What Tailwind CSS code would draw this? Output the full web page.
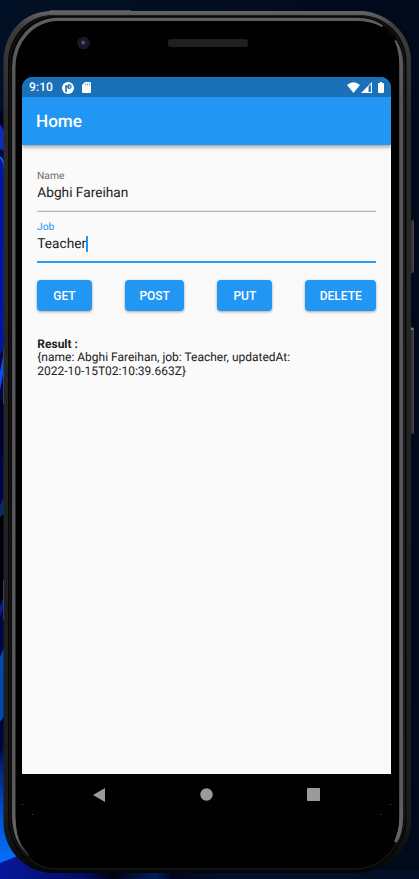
<!DOCTYPE html>
<html lang="en">
<head>
<meta charset="utf-8">
<title>Home</title>
<script src="https://cdn.jsdelivr.net/npm/@tailwindcss/browser@4"></script>
</head>
<body class="relative h-[879px] w-[419px] overflow-hidden bg-[#020d21] font-['Roboto',sans-serif] text-[#212121] [text-rendering:geometricPrecision]">
<!-- Wallpaper and handset -->
<svg class="absolute inset-0" width="419" height="879" viewBox="0 0 419 879" aria-hidden="true">
  <defs>
    <linearGradient id="sky" x1="0" x2="1"><stop offset="0" stop-color="#021026"/><stop offset="1" stop-color="#010a1b"/></linearGradient>
    <linearGradient id="low" x1="0" y1="0" x2="0" y2="1"><stop offset="0" stop-color="#000a48"/><stop offset=".55" stop-color="#0052d8"/><stop offset="1" stop-color="#0878ff"/></linearGradient>
    <linearGradient id="floor" x1="0" x2="1"><stop offset="0" stop-color="#061899"/><stop offset=".2" stop-color="#000d62"/><stop offset=".27" stop-color="#000211"/><stop offset=".37" stop-color="#001e60"/><stop offset=".41" stop-color="#000622"/><stop offset=".55" stop-color="#03102d"/><stop offset="1" stop-color="#020f24"/></linearGradient>
    <linearGradient id="rim" gradientUnits="userSpaceOnUse" x1="0" y1="10" x2="0" y2="874"><stop offset="0" stop-color="#68686c"/><stop offset=".02" stop-color="#3c3c3d"/><stop offset=".12" stop-color="#2b2b2b"/><stop offset=".93" stop-color="#1c1c1c"/><stop offset="1" stop-color="#050505"/></linearGradient>
    <linearGradient id="shine" gradientUnits="userSpaceOnUse" x1="0" y1="18" x2="0" y2="855"><stop offset="0" stop-color="#5f5f60"/><stop offset=".1" stop-color="#545456"/><stop offset=".93" stop-color="#5a5a5c"/><stop offset=".98" stop-color="#666"/><stop offset="1" stop-color="#222"/></linearGradient>
    <pattern id="mesh" width="2" height="2" patternUnits="userSpaceOnUse"><rect width="2" height="2" fill="#1d1d1d"/><rect width="1" height="1" fill="#292929"/></pattern>
  </defs>
  <rect width="419" height="879" fill="url(#sky)"/>
  <path d="M0 108Q8 116 10 130V879H0Z" fill="#000545"/>
  <path d="M0 110L7 121V133L0 124Z" fill="#00001d"/>
  <path d="M0 124L7 136V152L0 149Z" fill="#102bb5"/>
  <path d="M0 158Q5 163 5 185V345L0 355Z" fill="#0016a0"/>
  <path d="M0 157Q5 161 5 174" fill="none" stroke="#076af4" stroke-width="2"/>
  <path d="M0 372L5 345V365L0 390Z" fill="#064bff"/>
  <path d="M0 399H5V445L0 462Z" fill="#00002c"/>
  <path d="M0 506L5 494V513L0 517Z" fill="#082c60"/>
  <path d="M0 517L5 513V590L0 608Z" fill="#00000b"/>
  <path d="M0 606L5 594V603L0 617Z" fill="#061a96"/>
  <path d="M0 657L5 645V718L0 722Z" fill="#0048ad"/>
  <path d="M0 722L5 715V740L0 779Z" fill="#00043c"/>
  <path d="M0 760L3 742L6 820L26 866L0 875Z" fill="url(#low)"/>
  <path d="M0 863L20 855L38 870H419V879H0Z" fill="url(#floor)"/>
  <path d="M3.5 349V404M3.5 580V620" stroke="#555b66"/>
  <rect x="410" y="220" width="4" height="53" rx="1" fill="#303030"/>
  <path d="M413.2 221V272" stroke="#484848" stroke-width="1.3"/>
  <rect x="410" y="327" width="4" height="107" rx="1" fill="#303030"/>
  <path d="M413.2 329V433" stroke="#484848" stroke-width="1.3"/>
  <rect x="410.5" y="328" width="3" height="2" fill="#777"/>
  <path d="M50 10.5H131" stroke="#4b4b4b"/>
  <path d="M50 11H362C388 13 410 33 411 60V823C410 852 385 873 357 873H53C26 873 4 851 3.5 823V60C5 31 24 12 50 11Z" fill="url(#rim)"/>
  <path d="M51 15H361C386 16 406 36 406.5 61V822C405 848 382 871 356 871H54C29 871 9 848 8 821V61C9 36 28 16 51 15Z" fill="#070707"/>
  <path d="M52 15.5H360C385 18 404 37 404.5 62V820C403 846 380 869 355 869H56C31 869 11 846 10 820V62C11 37 29 18 52 15.5Z" fill="#080808" stroke="#1c1c1c"/>
  <path d="M56 18H359C382 19 403 38 403.5 64V822C402 846 378 867 354 867H57C33 867 12 846 11.5 820V64C12 39 31 19 56 18Z" fill="#050505"/>
  <path d="M382 27C374 21 365 19.5 357 19.5H58C32 20 14 41 13.7 67V816C14 833 19 845 29 855" fill="none" stroke="url(#shine)" stroke-width="3.5"/>
  <path d="M394.5 41C399 48 401.2 56 401.2 65V817C401 829 399 836 395 842" fill="none" stroke="url(#shine)" stroke-width="4"/>
  <path d="M16 70C17 39 35 22 58 21H357C368 21 378 24 383 28L395 42C398 49 399 56 399 65V817C399 827 397 835 394 842C386 860 373 868 354 868H57C40 868 34 861 28 853C19 844 16 834 16 820Z" fill="#010101"/>
  <circle cx="83.5" cy="43" r="6.3" fill="#1b1b1d"/><circle cx="83.5" cy="43" r="4.3" fill="#171925"/><circle cx="83.5" cy="42.7" r="2.7" fill="#242b58"/><circle cx="83" cy="42.5" r="1" fill="#7182ad"/>
  <rect x="168" y="39" width="80" height="8" rx="3" fill="url(#mesh)"/>
  <path d="M22 804h1v1h-1zM32 814h1v1h-1zM390 804h1v1h-1zM380 814h1v1h-1z" fill="#555"/>
</svg>

<main class="relative ml-[22px] mt-[77px] flex h-[738px] w-[369px] flex-col overflow-hidden rounded-t-[11px]">
  <header class="z-10 shrink-0 bg-[#2196f3] text-white shadow-[0_2px_4px_rgba(0,0,0,0.38)]">
    <div class="flex h-5 items-center bg-[#1a71b7] pl-[7px] pr-[7px]">
      <span class="w-[33px] text-[12px] font-medium leading-5 tracking-[0.1px]">9:10</span>
      <svg class="mt-px" width="12" height="12" viewBox="0 0 12 12"><circle cx="6" cy="6" r="6" fill="white"/><path d="M3.2 9.7V3.2H5.8V5.7H4.8V10.5" fill="#1a71b7"/><path d="M6.6 2.9H7.3A1.75 1.75 0 0 1 7.3 6.4H6.6Z" fill="none" stroke="#1a71b7" stroke-width="1.2"/></svg>
      <svg class="ml-2 mt-px" width="9" height="11" viewBox="0 0 9 11"><path d="M3 0H8Q9 0 9 1V10Q9 11 8 11H1Q0 11 0 10V3Z" fill="white"/><path d="M3.5 1.5V3.5M5.5 1.5V3.5M7.5 1.5V3.5" stroke="#1a71b7" stroke-width=".6"/></svg>
      <svg class="ml-auto" width="13" height="11" viewBox="0 0 13 11"><path d="M0 2.9Q6.5-2.4 13 2.9L6.5 11Z" fill="white"/></svg>
      <svg class="ml-[1px]" width="11" height="11" viewBox="0 0 11 11"><path d="M0 11L11 0V11Z" fill="white"/><path d="M7.6 4.5L9.9 2.2V9.9H7.6Z" fill="#1a71b7"/></svg>
      <svg class="ml-[6px]" width="6" height="11" viewBox="0 0 6 11"><path d="M2 0H4V1H5.2Q6 1 6 2V10Q6 11 5 11H1Q0 11 0 10V2Q0 1 .8 1H2Z" fill="white"/></svg>
    </div>
    <h1 class="flex h-12 items-center pl-[14px] pt-px text-[17.14px] font-medium leading-5">Home</h1>
  </header>

  <section class="flex grow flex-col bg-[#fafafa] px-[15px] pt-[25px]">
    <div class="h-[42px] border-b border-[#b5b5b5] text-[13.7px] shadow-[inset_0_-1px_0_#ebebeb]">
      <div class="text-[10.3px] leading-3 text-[#6b6b6b]">Name</div>
      <div class="mt-[2px] pl-[0.3px] leading-[18px]">Abghi Fareihan</div>
    </div>
    <div class="mt-[9px] h-[42px] border-b-2 border-[#2b9af3] text-[13.7px]">
      <div class="text-[10.3px] leading-3 text-[#2196f3]">Job</div>
      <div class="mt-[2px] flex items-center pl-[0.3px] leading-[18px]">Teacher<span class="-ml-[0.4px] mb-px h-4 w-[2px] bg-[#2196f3]"></span></div>
    </div>
    <div class="mt-[17px] flex justify-between text-[12px] font-medium text-white">
      <button class="h-[31px] w-[55px] rounded-[4px] bg-[#2196f3] pt-px shadow-[0_1px_3px_rgba(0,0,0,0.35)]">GET</button>
      <button class="h-[31px] w-[59px] rounded-[4px] bg-[#2196f3] pt-px shadow-[0_1px_3px_rgba(0,0,0,0.35)]">POST</button>
      <button class="h-[31px] w-[55px] rounded-[4px] bg-[#2196f3] pt-px shadow-[0_1px_3px_rgba(0,0,0,0.35)]">PUT</button>
      <button class="h-[31px] w-[70.5px] rounded-[4px] bg-[#2196f3] pt-px shadow-[0_1px_3px_rgba(0,0,0,0.35)]">DELETE</button>
    </div>
    <div class="mt-[26.6px] pl-[0.3px] text-[12px] leading-[13.7px]">
      <h2 class="font-bold">Result :</h2>
      <p>{name: Abghi Fareihan, job: Teacher, updatedAt:<br>2022-10-15T02:10:39.663Z}</p>
    </div>
  </section>

  <nav class="flex h-[41px] shrink-0 items-center pl-[71px]">
    <svg width="12" height="14" viewBox="0 0 12 14"><path d="M12 0V14L0 7Z" fill="#9b9b9b"/></svg>
    <svg class="ml-[95px]" width="13" height="13"><circle cx="6.5" cy="6.5" r="6.2" fill="#9b9b9b"/></svg>
    <svg class="ml-[94px]" width="13" height="13"><rect width="13" height="13" rx=".7" fill="#9b9b9b"/></svg>
  </nav>
</main>
</body>
</html>
